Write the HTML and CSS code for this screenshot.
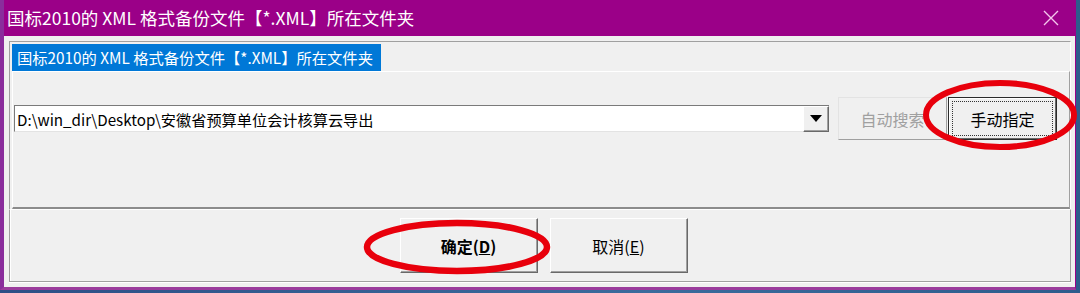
FILE: index.html
```html
<!DOCTYPE html>
<html lang="zh-CN">
  <head>
    <meta charset="UTF-8" />
    <title>国标2010的 XML 格式备份文件【*.XML】所在文件夹</title>
    <link rel="stylesheet" href="styles.css">
  </head>
  <body>
    <div class="window">
      <div class="titlebar">
        <span class="title">国标2010的 XML 格式备份文件【*.XML】所在文件夹</span>
        <svg class="close" width="16" height="16" viewBox="0 0 16 16">
          <path d="M1 1 L15 15 M15 1 L1 15" stroke="#f4c6ec" stroke-width="1.4" fill="none" />
        </svg>
      </div>

      <div class="client">
        <div class="tabs">
          <div class="tab-strip">
            <div class="tab active">国标2010的 XML 格式备份文件【*.XML】所在文件夹</div>
          </div>
          <div class="tab-page">
            <div class="path-row">
              <div class="combo">
                <span class="combo-text">D:\win_dir\Desktop\安徽省预算单位会计核算云导出</span>
                <span class="combo-arrow">
                  <svg width="12" height="7" viewBox="0 0 12 7"><path d="M0 0 H12 L6 7 Z" fill="#000" /></svg>
                </span>
              </div>
              <button class="btn btn-side" disabled>自动搜索</button>
              <button class="btn btn-side btn-focus"><span class="focus-rect">手动指定</span></button>
            </div>
          </div>
        </div>

        <div class="actions">
          <button class="btn btn-main btn-default">确定(<u>D</u>)</button>
          <button class="btn btn-main">取消(<u>E</u>)</button>
        </div>
      </div>
    </div>

    <svg class="marks" width="1080" height="293" viewBox="0 0 1080 293">
      <ellipse cx="1000" cy="115" rx="74" ry="32" fill="none" stroke="#e8000c" stroke-width="6" />
      <ellipse cx="457" cy="247" rx="90" ry="24" fill="none" stroke="#e8000c" stroke-width="6.5" />
    </svg>
  </body>
</html>
```

FILE: styles.css
```css
* {
  box-sizing: border-box;
}

body {
  margin: 0;
  width: 1080px;
  height: 293px;
  background: linear-gradient(90deg, #2d4f86, #3a6b9c 60%, #2d5c8c);
  font-family: "Noto Sans CJK SC", "Noto Sans", sans-serif;
  overflow: hidden;
  position: relative;
}

.window {
  width: 1076px;
  height: 290px;
  background: #9b0088;
  border-left: 4px solid #8a2d9c;
  border-right: 1px solid #9b0088;
  border-bottom: 3px solid #9b3c9c;
}

.titlebar {
  height: 36px;
  display: flex;
  align-items: center;
  justify-content: space-between;
  padding: 0 16px 2px 3px;
  color: #fff;
  font-size: 17.5px;
}

.close {
  margin-top: 1px;
}

.client {
  height: 251px;
  background: #f0f0f0;
  padding: 5px 0 0 5px;
}

.tabs {
  width: 1062px;
  height: 168px;
  border-top: 1px solid #a0a0a0;
  border-left: 1px solid #a0a0a0;
  border-right: 1px solid #fff;
}

.tab-strip {
  height: 29px;
  padding: 2px 0 0 2px;
  display: flex;
}

.tab {
  height: 27px;
  padding: 0 8px 0 5px;
  font-size: 15.3px;
  line-height: 26px;
  white-space: nowrap;
}

.tab.active {
  background: #0078d7;
  color: #fff;
}

.tab-page {
  height: 138px;
  margin-left: 2px;
  border-top: 1px solid #fff;
  border-left: 1px solid #fff;
  border-right: 1px solid #a0a0a0;
  border-bottom: 2px solid #8c8c8c;
  width: 1058px;
  padding: 25px 0 0 1px;
}

.path-row {
  display: flex;
  align-items: center;
  height: 43px;
}

.combo {
  width: 815px;
  height: 27px;
  background: #fff;
  border-top: 1px solid #7a7a7a;
  border-left: 1px solid #7a7a7a;
  border-bottom: 1px solid #e3e3e3;
  display: flex;
  align-items: center;
  justify-content: space-between;
  margin-right: 9px;
}

.combo-text {
  font-size: 15.2px;
  padding-left: 2px;
  color: #000;
  white-space: nowrap;
}

.combo-arrow {
  width: 26px;
  height: 26px;
  background: #f0f0f0;
  border-top: 1px solid #fff;
  border-left: 1px solid #fff;
  border-right: 1px solid #696969;
  border-bottom: 1px solid #696969;
  box-shadow: inset -1px -1px #a0a0a0;
  display: flex;
  align-items: center;
  justify-content: center;
}

.btn {
  background: #f0f0f0;
  font-family: inherit;
  font-size: 16px;
  color: #000;
  border-top: 1px solid #fff;
  border-left: 1px solid #fff;
  border-right: 1px solid #696969;
  border-bottom: 1px solid #696969;
  box-shadow: inset -1px -1px #a0a0a0;
  padding: 0;
}

.btn-side {
  width: 109px;
  height: 43px;
  margin-right: 1px;
}

.btn-side:disabled {
  color: #a0a0a0;
  border-color: #e3e3e3 #a0a0a0 #a0a0a0 #e3e3e3;
  box-shadow: none;
}

.btn-focus {
  border: 1px solid #2b2b2b;
  box-shadow: inset -1px -1px #696969, inset 1px 1px #fff;
  padding: 3px;
}

.focus-rect {
  display: flex;
  align-items: center;
  justify-content: center;
  height: 100%;
  border: 1px dotted #333;
}

.actions {
  width: 1062px;
  height: 73px;
  border-top: 1px solid #fff;
  border-left: 1px solid #a0a0a0;
  border-right: 1px solid #a0a0a0;
  border-bottom: 1px solid #a0a0a0;
  box-shadow: inset 1px 0 #fff, 0 1px #fff;
  display: flex;
  justify-content: center;
  align-items: flex-start;
  gap: 12px;
  padding: 8px 0 0 7px;
}

.btn-main {
  width: 138px;
  height: 55px;
}

.btn-default {
  font-weight: bold;
}

.marks {
  position: absolute;
  top: 0;
  left: 0;
  pointer-events: none;
}
```
